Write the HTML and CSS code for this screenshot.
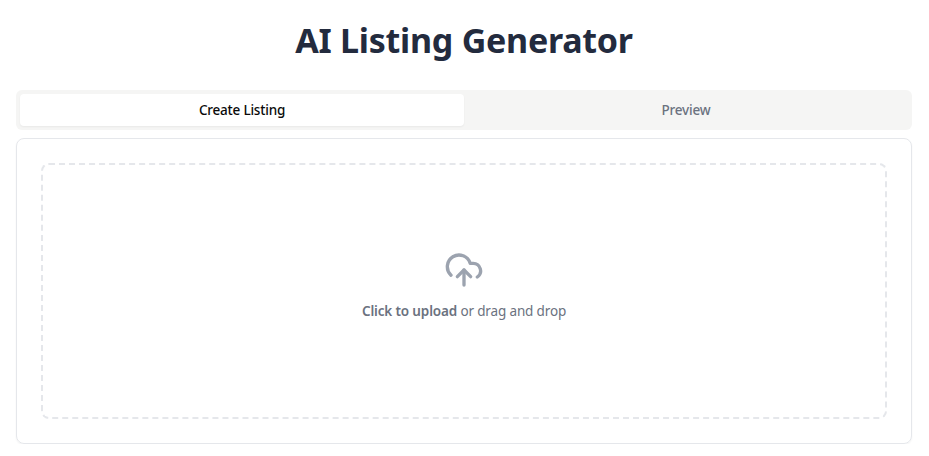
FILE: index.html
```html
<!DOCTYPE html>
<html lang="en">
<head>
<meta charset="utf-8">
<title>AI Listing Generator</title>
<link rel="stylesheet" href="styles.css">
</head>
<body>
<main class="page">
  <h1 class="title">AI Listing Generator</h1>
  <div class="tabs">
    <button class="tab tab-active">Create Listing</button>
    <button class="tab">Preview</button>
  </div>
  <section class="card">
    <div class="dropzone">
      <svg class="icon" viewBox="0 0 24 24" fill="none" stroke="currentColor" stroke-width="2" stroke-linecap="round" stroke-linejoin="round">
        <path d="M4.2 15.1A7 7 0 1 1 15.71 8h1.79a4.5 4.5 0 0 1 2.5 8.2"/>
        <path d="M12 12v9"/>
        <path d="m16 16-4-4-4 4"/>
      </svg>
      <p class="hint"><strong class="hint-strong">Click to upload</strong> or drag and drop</p>
    </div>
  </section>
</main>
</body>
</html>
```
FILE: styles.css
```css
* { box-sizing: border-box; }
html, body { margin: 0; background: #fff; }
body { font-family: "Noto Sans", sans-serif; }
.page { padding: 16px 17px 0 16px; }
.title {
  margin: 0 0 26px;
  height: 48px;
  line-height: 48px;
  font-size: 34px;
  font-weight: 700;
  letter-spacing: -0.25px;
  text-align: center;
  color: #232b3e;
}
.tabs {
  display: grid;
  grid-template-columns: 1fr 1fr;
  height: 40px;
  padding: 4px;
  border-radius: 6px;
  background: #f5f5f4;
}
.tab {
  border: 0;
  border-radius: 4px;
  background: transparent;
  font-family: inherit;
  font-size: 13.5px;
  font-weight: 500;
  letter-spacing: -0.2px;
  color: #6b7280;
  padding: 0;
}
.tab-active {
  background: #fff;
  color: #0a0a0a;
  box-shadow: 0 1px 2px rgba(0,0,0,.05);
}
.card {
  margin-top: 8px;
  padding: 24px;
  border: 1px solid #e5e7eb;
  border-radius: 8px;
  box-shadow: 0 1px 2px rgba(0,0,0,.05);
}
.dropzone {
  height: 256px;
  padding-bottom: 12px;
  display: flex;
  flex-direction: column;
  align-items: center;
  justify-content: center;
  border: 2px dashed #e5e7eb;
  border-radius: 8px;
}
.icon { width: 40px; height: 40px; color: #9ca3af; margin-bottom: 11px; }
.hint { margin: 0; font-size: 13.5px; line-height: 20px; letter-spacing: -0.15px; color: #6b7280; }
.hint-strong { font-weight: 600; }
```
